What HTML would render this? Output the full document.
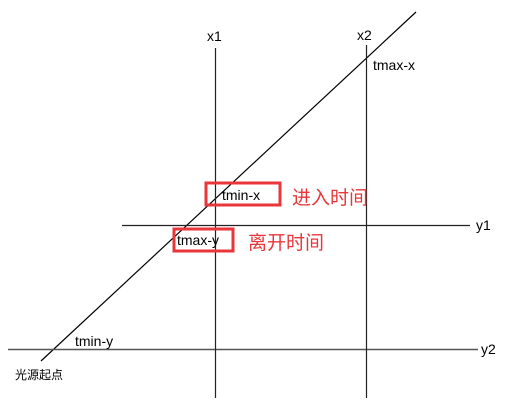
<!DOCTYPE html><html><head><style>body{margin:0;background:#fff}svg{display:block}text{font-family:"Liberation Sans","Noto Sans CJK SC",sans-serif;font-size:14px;fill:#000}</style></head><body>
<svg width="513" height="411" viewBox="0 0 513 411">
<line x1="41" y1="361" x2="416" y2="12" stroke="#000" stroke-width="1.2"/>
<line x1="8" y1="349.5" x2="478" y2="349.5" stroke="#555" stroke-width="1.5"/>
<line x1="122" y1="225.5" x2="470" y2="225.5" stroke="#222" stroke-width="1.2"/>
<line x1="215.5" y1="48" x2="215.5" y2="398" stroke="#222" stroke-width="1.2"/>
<line x1="366.5" y1="45" x2="366.5" y2="398" stroke="#222" stroke-width="1.2"/>
<rect x="206" y="183" width="74" height="22" fill="none" stroke="#e8363a" stroke-width="3"/>
<rect x="174" y="229" width="59" height="22" fill="none" stroke="#e8363a" stroke-width="3"/>
<text x="207" y="41">x1</text>
<text x="357" y="40">x2</text>
<text x="373" y="70">tmax-x</text>
<text x="222" y="200">tmin-x</text>
<text x="177" y="245">tmax-y</text>
<text x="75" y="346">tmin-y</text>
<text x="476" y="230">y1</text>
<text x="481" y="354">y2</text>
<text x="15" y="379" style="font-size:12px">光源起点</text>
<text x="292" y="204" style="font-size:19px;fill:#e8363a">进入时间</text>
<text x="248" y="249" style="font-size:19px;fill:#e8363a">离开时间</text>
</svg></body></html>
